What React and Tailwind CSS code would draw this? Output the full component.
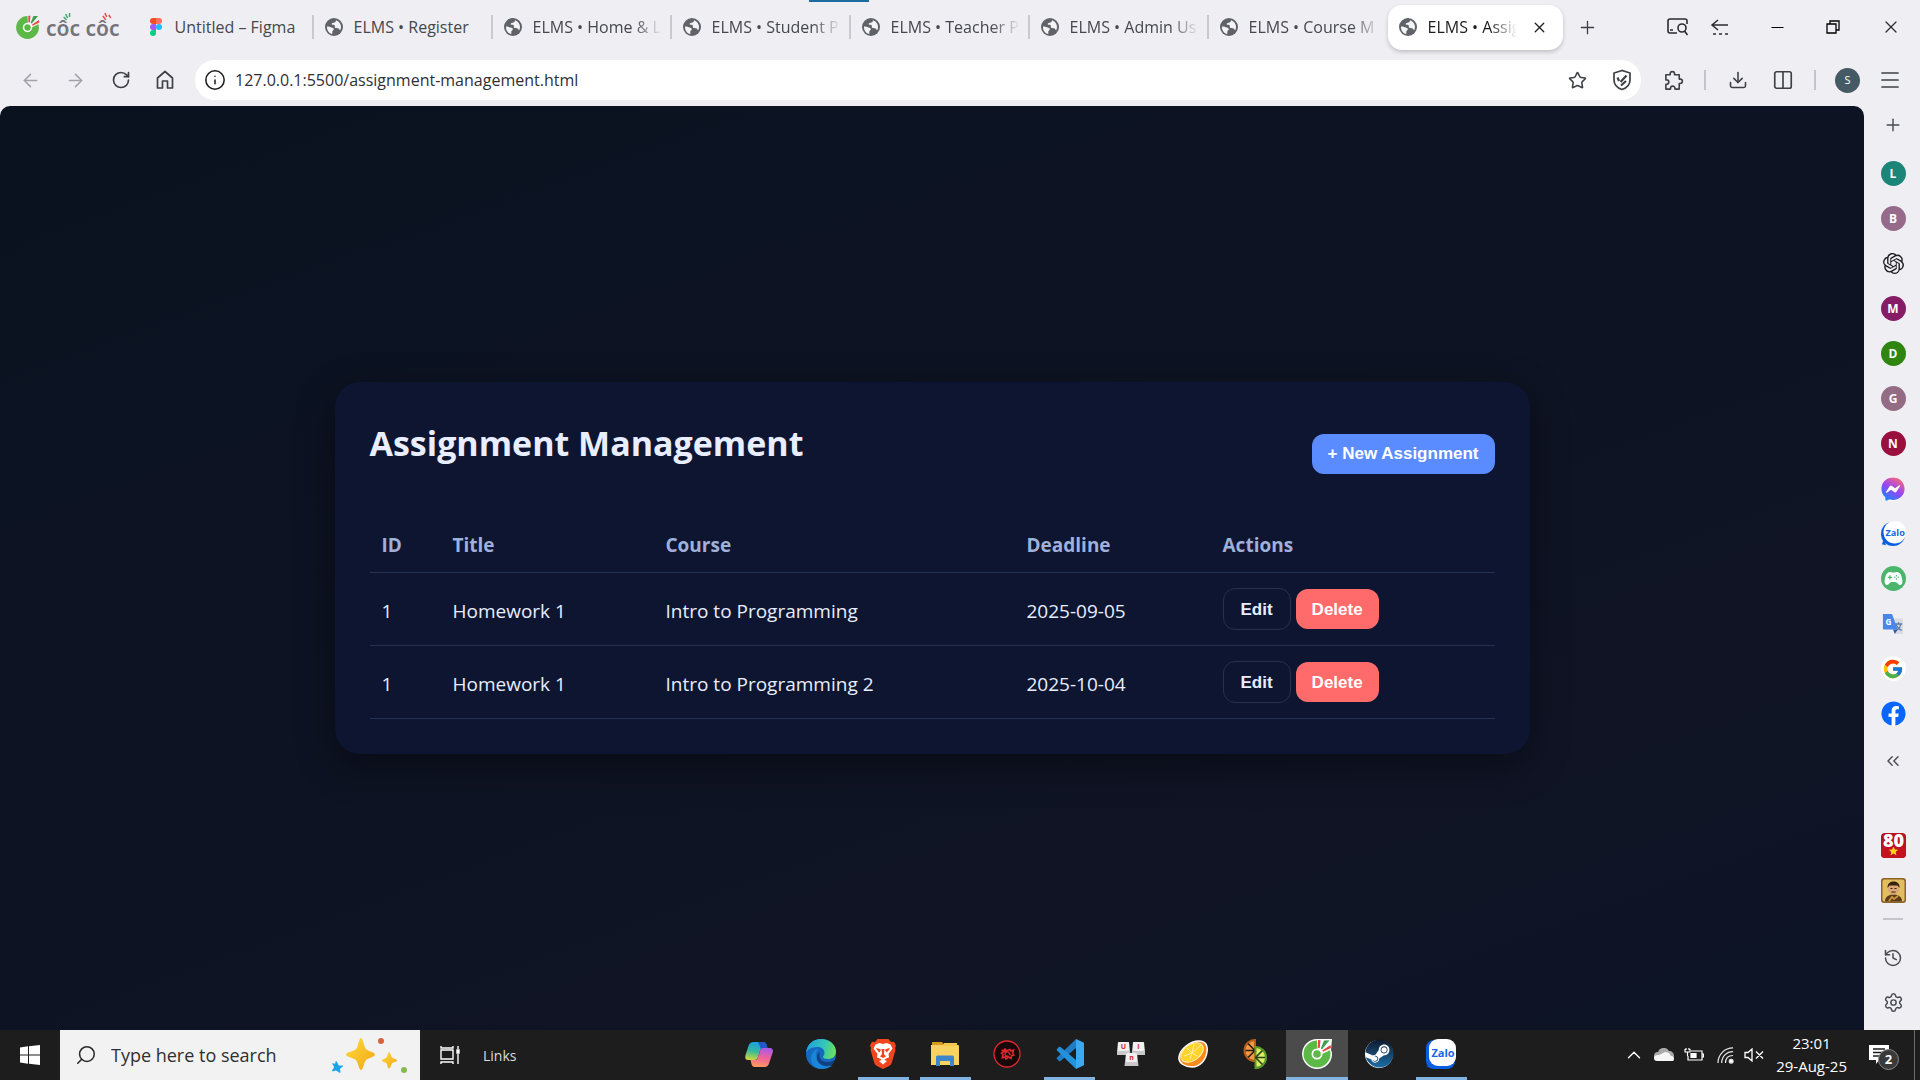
import React from "react";
import {
  ArrowLeft, ArrowRight, RotateCw, Info, Star, Download, Columns2, Menu, Plus, X, Minus,
  ChevronsLeft, History, Settings, ChevronUp, Search,
} from "lucide-react";
import { SiOpenai } from "react-icons/si";
import { FcGoogle } from "react-icons/fc";
import { FaFacebook, FaFacebookMessenger, FaSteam } from "react-icons/fa";
import { IoGameController } from "react-icons/io5";

const tabs = [
  "ELMS • Register",
  "ELMS • Home & L",
  "ELMS • Student P",
  "ELMS • Teacher P",
  "ELMS • Admin Us",
  "ELMS • Course M",
];

const assignments = [
  { id: 1, title: "Homework 1", course: "Intro to Programming", deadline: "2025-09-05" },
  { id: 1, title: "Homework 1", course: "Intro to Programming 2", deadline: "2025-10-04" },
];

function Globe() {
  return (
    <svg viewBox="0 0 18 18" className="size-[18px] shrink-0" aria-hidden="true">
      <circle cx="9" cy="9" r="9" fill="#5f6368" />
      <path d="M2 8.500C3.500 8.200 5 9 6.500 9.500c1.500.4 2.500.8 2.300 2-.2 1-1.500 1-1.500 2.300v2.300C4.200 15.500 1.700 12.500 2 8.500Z" fill="#f4f4f7" />
      <path d="M11 2.300c2.800.8 5 3.500 5 6.700 0 1.200-.3 2.300-.8 3.200-.8-.2-.9-1.600-2-2-1.200-.4-2.500.2-3.200-.8-.6-1 .3-1.700-.6-2.300-1-.6-2 .1-2.600-.7-.4-.8.6-1.500 1.700-1.600 1.200-.1 2.300-.6 2.500-2.500Z" fill="#f4f4f7" />
    </svg>
  );
}

function CocCocMark({ className, outlined }) {
  return (
    <svg viewBox="0 0 32 32" className={className} aria-hidden="true">
      {outlined && <path d="M16 1a15 15 0 1 0 14.500 19c1-4 .5-6-.5-8L31 1Z" fill="#fff" />}
      <path d="M16 2.500A13.500 13.500 0 1 0 29.500 16c0-1.500-.2-2.500-.6-3.800L21 16a5 5 0 1 1-4.500-5Z" fill="#5cb947" />
      <circle cx="16" cy="16" r="5.500" fill="#fff" />
      <circle cx="16" cy="16" r="3.800" fill="#5cb947" />
      <path d="m17 2 2.500.2-.8 8-1.700-.4Z" fill="#e5483d" />
      <path d="m23 2.500 5.500-.2-7.500 9-1.200-.8Z" fill="#3f9e4d" />
      <path d="m29.500 7 .5 3-8 3.800-.7-1.200Z" fill="#e5483d" />
    </svg>
  );
}

function CocCocBrand() {
  return (
    <a href="#home" aria-label="Cốc Cốc" className="mr-[29px] flex h-full shrink-0 items-center gap-[5px]">
      <CocCocMark className="size-[27px]" />
      <span className="relative pt-[2px] font-['Noto_Sans'] text-[21px] leading-[24px] font-semibold text-[#74747a]">
        côc côc
        <svg viewBox="0 0 75 10" className="absolute -top-[3px] left-0 h-[10px] w-full" fill="none" strokeWidth="1.500" aria-hidden="true">
          <path d="m20 3 2 4M18 6l3 3M24 2v4" stroke="#3fa66b" />
          <path d="m60 2 2 4M58 5l3 4M64 4l2 3" stroke="#e5483d" />
        </svg>
      </span>
    </a>
  );
}

function FigmaIcon() {
  return (
    <svg viewBox="0 0 12 18" className="h-[18px] w-[14px] shrink-0" aria-hidden="true">
      <path d="M3 0h3v6H3a3 3 0 0 1 0-6Z" fill="#f24e1e" />
      <path d="M6 0h3a3 3 0 0 1 0 6H6Z" fill="#ff7262" />
      <path d="M3 6h3v6H3a3 3 0 0 1 0-6Z" fill="#a259ff" />
      <circle cx="9" cy="9" r="3" fill="#1abcfe" />
      <path d="M3 12h3v3a3 3 0 1 1-3-3Z" fill="#0acf83" />
    </svg>
  );
}

function TabBar() {
  return (
    <header className="relative flex h-[54px] items-center pl-[14px]">
      <span className="absolute top-0 left-[809px] h-[2px] w-[60px] bg-[#1b6c9f]" />
      <CocCocBrand />
      <nav aria-label="Tabs" className="flex min-w-0 items-center text-[16px] text-[#46474c]">
        <button className="flex h-[24px] w-[165px] items-center gap-[12px] border-r-2 border-[#c9c9ce] text-left">
          <FigmaIcon />
          <span className="whitespace-nowrap">Untitled – Figma</span>
        </button>
        {tabs.map((label, i) => (
          <button
            key={label}
            className={
              "flex h-[24px] w-[179px] items-center gap-[11px] border-[#c9c9ce] pr-[8px] pl-[11px] text-left " +
              (i < tabs.length - 1 ? "border-r-2" : "")
            }
          >
            <Globe />
            <span
              className={
                "min-w-0 flex-1 overflow-hidden whitespace-nowrap " +
                (i > 0 ? "[mask-image:linear-gradient(to_right,black_78%,transparent)]" : "")
              }
            >
              {label}
            </span>
          </button>
        ))}
        <div className="flex h-[45px] w-[175px] items-center rounded-[14px] bg-white pr-[15px] pl-[11px] text-[#1c1c20] shadow-[0_2px_4px_rgba(0,0,0,0.2)]">
          <button className="flex min-w-0 flex-1 items-center gap-[11px] text-left">
            <Globe />
            <span className="min-w-0 flex-1 overflow-hidden whitespace-nowrap [mask-image:linear-gradient(to_right,black_70%,transparent)]">
              ELMS • Assig
            </span>
          </button>
          <button aria-label="Close tab" className="ml-[14px]">
            <X className="size-[17px]" strokeWidth={1.8} />
          </button>
        </div>
      </nav>
      <button aria-label="New tab" className="ml-[14px]">
        <Plus className="size-[21px] text-[#3f4045]" strokeWidth={1.5} />
      </button>
      <div className="ml-auto flex shrink-0 items-center pr-[19px] text-[#2c2c30]">
        <button aria-label="Search page" className="mr-[21px]">
          <svg viewBox="0 0 22 20" className="h-[20px] w-[22px]" fill="none" stroke="currentColor" strokeWidth="1.600">
            <path d="M10 16H3a2 2 0 0 1-2-2V4a2 2 0 0 1 2-2h15a2 2 0 0 1 2 2v3" />
            <circle cx="15" cy="11" r="4" />
            <path d="m17.500 14 3 4M3 13h3" />
          </svg>
        </button>
        <button aria-label="Closed tabs" className="mr-[38px]">
          <svg viewBox="0 0 20 20" className="size-[20px]" fill="none" stroke="currentColor" strokeWidth="1.500">
            <path d="M18 8H2M8 3 2 8l6 5" />
            <path d="M3 17h15" strokeDasharray="3 3" />
          </svg>
        </button>
        <button aria-label="Minimize" className="mr-[39px]">
          <Minus className="size-[19px] text-black" strokeWidth={1.5} />
        </button>
        <button aria-label="Restore" className="mr-[41px]">
          <svg viewBox="0 0 14 14" className="size-[14px]" fill="none" stroke="#000" strokeWidth="1.300">
            <path d="M1 4h9v9H1ZM4 4V1h9v9h-3" />
          </svg>
        </button>
        <button aria-label="Close">
          <X className="size-[20px]" strokeWidth={1.5} />
        </button>
      </div>
    </header>
  );
}

function Toolbar() {
  return (
    <div className="flex h-[52px] items-center pr-[18px] pl-[20px] text-[#3f4045]">
      <button aria-label="Back" className="mr-[24px] text-[#a2a2a8]"><ArrowLeft className="size-[21px]" strokeWidth={1.7} /></button>
      <button aria-label="Forward" className="mr-[25px] text-[#a2a2a8]"><ArrowRight className="size-[21px]" strokeWidth={1.7} /></button>
      <button aria-label="Reload" className="mr-[24px]"><RotateCw className="size-[20px]" strokeWidth={2} /></button>
      <button aria-label="Home" className="mr-[20px]">
        <svg viewBox="0 0 20 20" className="size-[20px]" fill="none" stroke="currentColor" strokeWidth="1.700" strokeLinejoin="round">
          <path d="M2.500 8 10 1.500 17.500 8v10h-5v-7h-5v7h-5Z" />
        </svg>
      </button>
      <div className="flex h-[40px] min-w-0 flex-1 items-center rounded-full bg-white pr-[9px] pl-[9px]">
        <Info className="mr-[9px] size-[22px] text-[#1f1f23]" strokeWidth={1.7} />
        <input
          aria-label="Address"
          defaultValue="127.0.0.1:5500/assignment-management.html"
          className="min-w-0 flex-1 bg-transparent text-[16px] text-[#2f3035] outline-none"
        />
        <button aria-label="Bookmark" className="mr-[25px]"><Star className="size-[19px]" strokeWidth={2} strokeLinejoin="miter" /></button>
        <button aria-label="Shield">
          <svg viewBox="0 0 20 22" className="h-[22px] w-[20px]" fill="none" stroke="currentColor" strokeWidth="1.700">
            <path d="M10 1.500 2 4v7c0 5 3.500 8 8 9.500 4.500-1.500 8-4.500 8-9.500V4Z" />
            <path d="M5.500 8.500 7 12M8.500 13l6-6.500M9 16.500l5-4.500" strokeWidth="2.200" />
          </svg>
        </button>
      </div>
      <button aria-label="Extensions" className="ml-[22px]">
        <svg viewBox="0 0 22 22" className="size-[21px]" fill="none" stroke="currentColor" strokeWidth="1.700" strokeLinejoin="round">
          <path d="M3 5h4.500V4a2.300 2.300 0 0 1 4.600 0v1H17v4.500h1a2.300 2.300 0 0 1 0 4.600h-1V20h-4.500v-.8a2.300 2.300 0 0 0-4.600 0v.8H3v-5h.8a2.300 2.300 0 0 0 0-4.600H3Z" />
        </svg>
      </button>
      <span className="mr-[22px] ml-[20px] h-[20px] w-[2px] bg-[#c4c4ca]" />
      <button aria-label="Downloads"><Download className="size-[20px]" strokeWidth={1.9} /></button>
      <button aria-label="Split view" className="ml-[24px]"><Columns2 className="size-[22px]" strokeWidth={1.8} /></button>
      <span className="mr-[19px] ml-[20px] h-[20px] w-[2px] bg-[#c4c4ca]" />
      <button aria-label="Profile" className="flex size-[25px] items-center justify-center rounded-full bg-[#455a64] text-[11px] text-white">S</button>
      <button aria-label="Menu" className="ml-[18px]"><Menu className="size-[24px]" strokeWidth={1.7} /></button>
    </div>
  );
}

const shortcuts = [
  { letter: "L", className: "bg-[#1b8577]" },
  { letter: "B", className: "bg-[#966a8b]" },
  { name: "ChatGPT", icon: <SiOpenai className="size-[21px] text-[#1d1d1f]" /> },
  { letter: "M", className: "bg-[#871c66]" },
  { letter: "D", className: "bg-[#2e850f]" },
  { letter: "G", className: "bg-[#946b85]" },
  { letter: "N", className: "bg-[#990f3d]" },
  { name: "Messenger", icon: <Messenger /> },
  { name: "Zalo", icon: <Zalo className="size-[25px]" round /> },
  {
    name: "Games",
    icon: (
      <span className="flex size-[25px] items-center justify-center rounded-full bg-[#4bb56c]">
        <IoGameController className="size-[19px] text-white" />
      </span>
    ),
  },
  { name: "Translate", icon: <Translate /> },
  {
    name: "Google",
    icon: (
      <span className="flex size-[25px] items-center justify-center rounded-full bg-white">
        <FcGoogle className="size-[22px]" />
      </span>
    ),
  },
  { name: "Facebook", icon: <span className="rounded-full bg-white"><FaFacebook className="size-[25px] text-[#0866ff]" /></span> },
];

function Messenger() {
  return (
    <span className="rounded-full bg-white">
      <svg width="0" height="0" className="absolute" aria-hidden="true">
        <linearGradient id="messenger" x1="0.2" y1="1" x2="0.8" y2="0">
          <stop offset="0" stopColor="#1288ff" />
          <stop offset="0.5" stopColor="#9a45f5" />
          <stop offset="1" stopColor="#ff6a70" />
        </linearGradient>
      </svg>
      <FaFacebookMessenger className="size-[24px] fill-[url(#messenger)]" />
    </span>
  );
}

function Zalo({ className, round }) {
  return (
    <svg viewBox="0 0 30 30" className={className} aria-hidden="true">
      <rect width="29" height="29" y="1" rx={round ? 15 : 8} fill="#0a5fe0" />
      <path d="M3 20c0 3-1 6-2 8l5 1Z" fill="#0a5fe0" />
      <rect x="3" width="27" height="27" rx={round ? 14 : 9} fill="#fff" />
      <text x="17" y="18" textAnchor="middle" fontFamily="Open Sans, sans-serif" fontWeight="700" fontSize="11" fill="#1767e5">Zalo</text>
    </svg>
  );
}

function Translate() {
  return (
    <svg viewBox="0 0 24 24" className="size-[22px]" aria-hidden="true">
      <path d="M9 6h13a1 1 0 0 1 1 1v15a1 1 0 0 1-1 1h-8Z" fill="#d8dbe0" />
      <path d="M14 12h8M18 10v2M20.500 12c-.5 3-3 6-5 7M15.500 13c1 3 4 5 6 6" stroke="#5f7ba6" strokeWidth="1.400" fill="none" />
      <path d="m12 18 5 0-3 5Z" fill="#3457a8" />
      <path d="M1 1h10l6 17H2a1 1 0 0 1-1-1Z" fill="#4a86e8" />
      <text x="7" y="13" textAnchor="middle" fontFamily="Open Sans, sans-serif" fontWeight="700" fontSize="9" fill="#fff">G</text>
    </svg>
  );
}

function SideRail() {
  return (
    <aside className="flex w-[56px] shrink-0 flex-col items-center pt-[9px] pl-[2px] text-[#4a4b50]">
      <button aria-label="Add shortcut" className="mb-[26px]"><Plus className="size-[20px]" strokeWidth={1.7} /></button>
      <div className="flex flex-col items-center gap-[20px]">
        {shortcuts.map((s) => (
          <button
            key={s.letter || s.name}
            aria-label={s.letter || s.name}
            className={
              "flex size-[25px] items-center justify-center rounded-full text-[12px] font-bold text-white " + (s.className || "")
            }
          >
            {s.letter || s.icon}
          </button>
        ))}
      </div>
      <button aria-label="Collapse" className="mt-[25px]"><ChevronsLeft className="size-[20px]" strokeWidth={1.7} /></button>
      <div className="mt-[62px] flex flex-col items-center gap-[20px]">
        <button aria-label="80">
          <svg viewBox="0 0 25 25" className="size-[25px]" aria-hidden="true">
            <rect width="25" height="25" rx="4" fill="#b81220" />
            <text x="12.500" y="14" textAnchor="middle" fontFamily="Open Sans, sans-serif" fontWeight="800" fontSize="18" fill="#fff">80</text>
            <path d="M0 14h25v7a4 4 0 0 1-4 4H4a4 4 0 0 1-4-4Z" fill="#c4121f" />
            <path d="m12.500 13.500 1.400 3 3.200.3-2.400 2.200.7 3.200-2.900-1.700-2.900 1.700.7-3.200-2.400-2.200 3.200-.3Z" fill="#ffd21e" />
          </svg>
        </button>
        <button aria-label="Game">
          <svg viewBox="0 0 25 25" className="size-[25px]" aria-hidden="true">
            <rect width="25" height="25" rx="3" fill="#8a6426" />
            <rect x="1.500" y="1.500" width="22" height="22" rx="2" fill="#e3bd62" />
            <path d="M4 23.500c0-5 4-7 8.500-7s8.500 2 8.500 7Z" fill="#5b3a1b" />
            <circle cx="12.500" cy="11" r="5.500" fill="#dca676" />
            <path d="M6.500 10c0-5 3-6.500 6-6.500s6.500 1.500 6 6.500l-2-2.500H8.500Z" fill="#35230f" />
            <path d="M9.500 10.500h2M13.500 10.500h2M10.500 14h4" stroke="#35230f" />
            <path d="m8 23 3-4 2 2 4-3" stroke="#c8933d" strokeWidth="2" fill="none" />
          </svg>
        </button>
      </div>
      <span className="mt-[15px] h-[2px] w-[20px] bg-[#c4c4ca]" />
      <button aria-label="History" className="mt-[28px]"><History className="size-[20px]" strokeWidth={1.8} /></button>
      <button aria-label="Settings" className="mt-[24px]"><Settings className="size-[21px]" strokeWidth={1.7} /></button>
    </aside>
  );
}

function AssignmentPage() {
  return (
    <main className="flex min-w-0 flex-1 items-center justify-center rounded-t-[10px] bg-[linear-gradient(160deg,#0a1220_0%,#0d1322_40%,#101425_75%,#0c1426_100%)] p-6 text-[#e8edff]">
      <section className="w-full max-w-[1195px] rounded-[25px] bg-[#0d1530] p-[35px] shadow-[0_12px_38px_rgba(0,0,0,0.4)]">
        <div className="mb-[27px] flex items-center justify-between">
          <h1 className="mb-[22px] text-[34px] leading-[52px] font-bold">Assignment Management</h1>
          <button className="h-[40px] rounded-[12px] bg-[#5b8cff] px-[16px] font-['Liberation_Sans'] text-[17px] font-bold text-white">
            + New Assignment
          </button>
        </div>
        <table className="w-full table-fixed border-collapse text-left">
          <colgroup>
            <col className="w-[71px]" />
            <col className="w-[213px]" />
            <col className="w-[361px]" />
            <col className="w-[196px]" />
            <col />
          </colgroup>
          <thead>
            <tr className="h-[55px] border-b border-[#243150] text-[19px] text-[#9fb0da]">
              {["ID", "Title", "Course", "Deadline", "Actions"].map((h) => (
                <th key={h} className="px-[12px] font-bold">{h}</th>
              ))}
            </tr>
          </thead>
          <tbody>
            {assignments.map((a) => (
              <tr key={a.deadline} className="h-[73px] border-b border-[#243150] text-[19px]">
                <td className="px-[12px] pt-[4px]">{a.id}</td>
                <td className="px-[12px] pt-[4px]">{a.title}</td>
                <td className="px-[12px] pt-[4px]">{a.course}</td>
                <td className="px-[12px] pt-[4px]">{a.deadline}</td>
                <td className="px-[12px]">
                  <div className="flex items-center gap-[5px] font-['Liberation_Sans'] text-[17px] font-bold">
                    <button className="h-[42px] rounded-[12px] border border-[#26314f] px-[17px]">Edit</button>
                    <button className="h-[40px] rounded-[12px] bg-[#ff6b6b] px-[16px] text-white">Delete</button>
                  </div>
                </td>
              </tr>
            ))}
          </tbody>
        </table>
      </section>
    </main>
  );
}

function Copilot() {
  return (
    <svg viewBox="0 0 30 30" className="size-[30px]" aria-hidden="true">
      <defs>
        <linearGradient id="cpl" x1="0.5" y1="0" x2="0.3" y2="1">
          <stop offset="0" stopColor="#1aa0e8" /><stop offset="0.5" stopColor="#35b7a0" /><stop offset="1" stopColor="#c9d93a" />
        </linearGradient>
        <linearGradient id="cpr" x1="0.6" y1="0" x2="0.4" y2="1">
          <stop offset="0" stopColor="#a85be8" /><stop offset="0.5" stopColor="#f0629a" /><stop offset="1" stopColor="#ff9a5c" />
        </linearGradient>
      </defs>
      <path d="M10 3h9c2 0 3 1 3.500 3l1 3h-4c-2 0-3 1-3.500 3l-2 6c-.5 2-1.500 3-3.500 3H4c-3 0-3-3-2.500-5l3-9C5.500 4 7 3 10 3Z" fill="url(#cpl)" />
      <path d="M14 3h5c2 0 3 1 3.500 3l1 3h-4c-1 0-2 0-2.500 1Z" fill="#2356c8" />
      <path d="M20 28h-9c-2 0-3-1-3.500-3l-1-4h4c2 0 3-1 3.500-3l2-6c.5-2 1.500-3 3.500-3H26c3 0 3.500 3 2.500 5l-3 9c-1 4-2.500 5-5.500 5Z" fill="url(#cpr)" />
    </svg>
  );
}

function Edge() {
  return (
    <svg viewBox="0 0 30 30" className="size-[30px]" aria-hidden="true">
      <defs>
        <linearGradient id="edgeTop" x1="0" y1="0.3" x2="1" y2="0.5">
          <stop offset="0" stopColor="#1f9fe0" /><stop offset="0.6" stopColor="#35c7b5" /><stop offset="1" stopColor="#6be05a" />
        </linearGradient>
      </defs>
      <circle cx="15" cy="15" r="15" fill="#1669c1" />
      <path d="M0 14C1 5 7 0 15 0c9 0 15 6 15 12.500 0 5-4 7.500-8 7.500-3 0-5-1-5-2s1.500-1.500 1.500-4.500C18.500 10 15 8 11 8 5 8 1 11 0 14Z" fill="url(#edgeTop)" />
      <path d="M10 17c0 6 5 10.500 11 10.500 2 0 4-.5 6-2C24 29 20 30 16 30 9 30 5 25 5 19.500c0-5 3-9 7-9.500-1.500 2-2 4-2 7Z" fill="#1a86d8" />
      <path d="M14 13c-2 5 1 10 7 10 3 0 5-.5 7-2 .5 1-.5 3-2 4.500-7 4-15-1-15-7 0-3 1-4.500 3-5.500Z" fill="#123f7f" />
    </svg>
  );
}

function Brave() {
  return (
    <svg viewBox="0 0 26 30" className="h-[30px] w-[26px]" aria-hidden="true">
      <path d="M7.500 0h11l2.500 3 3-.3 2 3.800-1 2.500.5 2-3.500 12c-.5 2-1.500 3-3 4l-6 3-6-3c-1.500-1-2.500-2-3-4L.500 11l.5-2L0 6.500l2-3.800L5 3Z" fill="#f1461d" />
      <path d="m13 5 3.500-1 4 1.500 2 4-4 5.500.5 3.500-3 1-3 2.500-3-2.500-3-1 .5-3.500-4-5.500 2-4 4-1.500Z" fill="#fff" />
      <path d="m6 9 4 1 1 1-1.500 2.500L7 11ZM20 9l-4 1-1 1 1.500 2.500L19 11ZM11.500 10h3l-.5 5 2 2.500-3 1.500-3-1.500 2-2.500Z" fill="#f1461d" />
      <path d="m9 22 4-1.500 4 1.500-4 3.500Z" fill="#fff" />
    </svg>
  );
}

function Explorer() {
  return (
    <svg viewBox="0 0 28 24" className="h-[24px] w-[28px]" aria-hidden="true">
      <path d="M1 0h10l2 3H1Z" fill="#d99b1e" />
      <path d="M0 3h27a1 1 0 0 1 1 1v19H0Z" fill="#f9d262" />
      <path d="M13 1h13v3H11Z" fill="#f4c64e" />
      <path d="M5 24V15a1.500 1.500 0 0 1 1.500-1.500h15A1.500 1.500 0 0 1 23 15v9h-4v-5H9v5Z" fill="#3c87c9" />
    </svg>
  );
}

function GearRing() {
  return (
    <svg viewBox="0 0 28 28" className="size-[28px]" fill="none" stroke="#e0282e" aria-hidden="true">
      <circle cx="14" cy="14" r="13" strokeWidth="1.300" fill="#17090a" />
      <path d="m8.500 10 2 1 1.500-2 1.200 1.500M17 9.500l1 1.500 2.500-1-.7 3 1 2-2.300.8-.5 2.700-2.500-1.500-2.500 2-.7-2-3 .7.8-3-1.600-1.500 1.800-1.200Z" strokeWidth="1.600" />
      <path d="M15.500 12.200c-1.800-1-3.500.2-3.500 1.900 0 1.800 2 2.700 3.500 1.700M15.500 12.200 17.500 15" strokeWidth="1.400" />
    </svg>
  );
}

function VsCode() {
  return (
    <svg viewBox="0 0 30 30" className="size-[30px]" aria-hidden="true">
      <path d="M22 0 3 18.500c-.5.500-.5 1 0 1.500l2 2c.5.500 1 .5 1.500 0L22 9Z" fill="#1f7cc4" />
      <path d="M22 30 3 11.500c-.5-.5-.5-1 0-1.500l2-2c.5-.5 1-.5 1.500 0L22 21Z" fill="#2292dc" />
      <path d="m22 0 7 3.200c.6.300 1 .8 1 1.500v20.600c0 .7-.4 1.200-1 1.500L22 30Z" fill="#3ba9f2" />
    </svg>
  );
}

function Keycap({ x, y, letter }) {
  return (
    <g>
      <path d={`M${x + 1} ${y}h11l1.500 13h-14Z`} fill="#c9c9cc" />
      <rect x={x + 1} y={y} width="11" height="9" rx="1.500" fill="#f0f0f2" />
      <text x={x + 6.5} y={y + 7} textAnchor="middle" fontFamily="Open Sans, sans-serif" fontWeight="700" fontSize="7" fill="#d02a2a">{letter}</text>
    </g>
  );
}

function UniKey() {
  return (
    <svg viewBox="0 0 28 26" className="h-[26px] w-[28px]" aria-hidden="true">
      <Keycap x={0} y={1} letter="U" />
      <Keycap x={15} y={1} letter="I" />
      <Keycap x={8} y={12} letter="n" />
    </svg>
  );
}

function Orange() {
  return (
    <svg viewBox="0 0 30 28" className="h-[28px] w-[30px]" aria-hidden="true">
      <path d="M1 17C2 9 12 1 21 1c7 0 9 5 8 11-1 8-7 15-15 15C7 27 0 23 1 17Z" fill="#f58a1f" stroke="#fff" strokeWidth="1.500" />
      <ellipse cx="14" cy="12.500" rx="12.500" ry="8" transform="rotate(-35 14 12.500)" fill="#ffd32b" stroke="#fff3b8" />
      <path d="M14 13 6 16M14 13l9-8M14 13l5 3M14 13 9 8M14 13l-2 6M14 13l2-9" stroke="#fff0a0" />
    </svg>
  );
}

function CitrusHalves() {
  return (
    <svg viewBox="0 0 24 30" className="h-[30px] w-[24px]" aria-hidden="true">
      <path d="M12 1a10 10 0 0 0 0 21Z" fill="#f09a45" stroke="#b85d18" strokeWidth="2" />
      <path d="M12 11.500H2.500M12 11.500 5 4.500M12 11.500l-7 7" stroke="#2b1a10" strokeWidth="1.600" />
      <path d="M12.500 8a10 10 0 0 1 0 21Z" fill="#d9ee62" stroke="#5c9a28" strokeWidth="2" />
      <path d="M12.500 18.500H22M12.500 18.500l7-7M12.500 18.500l7 7" stroke="#2a4216" strokeWidth="1.600" />
    </svg>
  );
}

function Sparkles() {
  return (
    <svg viewBox="0 0 78 36" className="h-[36px] w-[78px]" aria-hidden="true">
      <defs>
        <linearGradient id="gold" x1="0" y1="0" x2="1" y2="1">
          <stop offset="0" stopColor="#ffdc3c" /><stop offset="1" stopColor="#f2a516" />
        </linearGradient>
      </defs>
      <path d="M30 1c2 0 3 9 5 11 2 2.500 9 3 9 5.500S37 21 35 23c-2 2.500-3 10-5 10s-3-7.500-5-10c-2-2-10-3-10-5.500S23 14.500 25 12c2-2 3-11 5-11Z" fill="url(#gold)" />
      <path d="M58 15c1 0 2 4 3 5.500 1 1 5 1.500 5 3s-4 1.500-5 3c-1 1-1.500 5-3 5s-1.500-4-2.500-5c-1-1.500-4.500-1.500-4.500-3s3.500-2 4.500-3c1-1.500 1.500-5.500 2.500-5.500Z" fill="url(#gold)" />
      <path d="M5 24c1 0 2 4 3 4.500s4-.5 4 .500-3 2-3 3 1 4 0 4-3-2.500-4-2.500S1 35 1 34s2-3 2-4-2-3-2-3.500 2.500.5 3 0S4.500 24 5 24Z" fill="#1ba3ea" />
      <circle cx="50" cy="4" r="3" fill="#d9633c" />
      <circle cx="73" cy="33" r="3" fill="#86b94e" />
    </svg>
  );
}

const apps = [
  { name: "Copilot", icon: <Copilot /> },
  { name: "Edge", icon: <Edge /> },
  { name: "Brave", icon: <Brave />, open: true },
  { name: "File Explorer", icon: <Explorer />, open: true },
  { name: "Launcher", icon: <GearRing /> },
  { name: "Visual Studio Code", icon: <VsCode />, open: true },
  { name: "UniKey", icon: <UniKey /> },
  { name: "Orange", icon: <Orange /> },
  { name: "Citrus", icon: <CitrusHalves /> },
  { name: "Cốc Cốc", icon: <CocCocMark className="size-[32px]" outlined />, open: true, active: true },
  { name: "Steam", icon: <Steam /> },
  { name: "Zalo", icon: <Zalo className="size-[30px]" />, open: true },
];

function Steam() {
  return (
    <span className="flex size-[28px] items-center justify-center rounded-full bg-white">
      <svg width="0" height="0" className="absolute" aria-hidden="true">
        <linearGradient id="steam" x1="0" y1="0" x2="0" y2="1">
          <stop offset="0" stopColor="#10182c" /><stop offset="1" stopColor="#1b6ea5" />
        </linearGradient>
      </svg>
      <FaSteam className="size-[29px] shrink-0 fill-[url(#steam)]" />
    </span>
  );
}

function Taskbar() {
  return (
    <footer className="flex h-[50px] items-center bg-[#1d1d1e] text-white">
      <button aria-label="Start" className="flex w-[60px] justify-center">
        <svg viewBox="0 0 20 20" className="size-[20px]" fill="#fff">
          <path d="m0 2.500 8-1.200v8.200H0ZM9 1.200 20 0v9.500H9ZM0 10.500h8v8.200l-8-1.200ZM9 10.500h11V20L9 18.800Z" />
        </svg>
      </button>
      <label className="flex h-full w-[360px] items-center bg-[#f2f2f2] pr-[11px] pl-[15px] text-[#2b2b2b]">
        <Search className="mr-[14px] size-[22px] -scale-x-100" strokeWidth={1.7} />
        <input aria-label="Search" placeholder="Type here to search" className="min-w-0 flex-1 bg-transparent text-[18px] outline-none placeholder:text-[#2f2f2f]" />
        <Sparkles />
      </label>
      <button aria-label="Task view" className="ml-[20px]">
        <svg viewBox="0 0 20 20" className="size-[20px]" fill="none" stroke="#fff" strokeWidth="1.400">
          <path d="M1 5h12v9H1ZM1 1v2h12V1M1 19v-2h12v2M18 1v3M18 9v10" />
          <path d="M17 5h2v3h-2Z" fill="#fff" />
        </svg>
      </button>
      <button className="ml-[23px] text-[14px] text-[#dcdcdc]">Links</button>
      <nav aria-label="Apps" className="ml-auto flex h-full">
        {apps.map((app) => (
          <button
            key={app.name}
            aria-label={app.name}
            className={"flex h-full w-[62px] flex-col items-center " + (app.active ? "bg-[#4b4b4c]" : "")}
          >
            <span className="flex flex-1 items-center">{app.icon}</span>
            <span className={"h-[3px] " + (app.active ? "w-full " : "w-[51px] ") + (app.open ? "bg-[#83b3e3]" : "")} />
          </button>
        ))}
      </nav>
      <div className="ml-[151px] flex h-full shrink-0 items-center">
        <button aria-label="Hidden icons"><ChevronUp className="size-[22px]" strokeWidth={1.5} /></button>
        <svg viewBox="0 0 20 14" className="ml-[9px] h-[14px] w-[20px]" aria-label="OneDrive">
          <path d="M4 12a4 4 0 0 1 0-8 6 6 0 0 1 11-1c3 0 5 2 5 5s-2 4-4 4Z" fill="#a9a9a9" />
          <path d="M3 13c-2 0-3-1-3-3 0-3 3-3 5-3l6-3c5 0 5 3 6 4 2 0 3 1 3 3s-1 2-3 2Z" fill="#f5f5f5" />
        </svg>
        <svg viewBox="0 0 20 14" className="ml-[10px] h-[14px] w-[20px]" fill="none" stroke="#fff" strokeWidth="1.200" aria-label="Battery">
          <path d="M7 3h11v9H4V8M18 6h1.500v3H18M1 1v3h5V1M2 0v2M5 0v2M3.500 4v4" />
          <path d="M7 5.500h5v4H7Z" fill="#fff" />
        </svg>
        <svg viewBox="0 0 18 18" className="ml-[13px] size-[17px]" fill="none" stroke="#e8e8e8" strokeWidth="1.300" aria-label="Wi-Fi">
          <path d="M1 17C1 8 8 1 17 1M5 17C5 10 10 5 17 5M9 17c0-5 3-8 8-8" />
          <circle cx="15" cy="15" r="2" fill="#fff" />
        </svg>
        <svg viewBox="0 0 20 14" className="ml-[10px] h-[14px] w-[20px]" fill="none" stroke="#fff" strokeWidth="1.300" aria-label="Muted">
          <path d="M1 4.500h3L8 1v12L4 9.500H1ZM12 3.500l7 7M19 3.500l-7 7" />
        </svg>
        <div className="ml-[12px] text-center text-[15px] leading-[23px]">
          <div>23:01</div>
          <div>29-Aug-25</div>
        </div>
        <button aria-label="Notifications" className="relative mr-[14px] ml-[22px] h-[30px] w-[31px]">
          <svg viewBox="0 0 20 20" className="size-[20px]">
            <path d="M0 0h20v15H10l-3 4v-4H0Z" fill="#fff" />
            <path d="M4 4h12M4 7.500h12M4 11h12" stroke="#1d1d1e" strokeWidth="1.300" />
          </svg>
          <span className="absolute top-[9px] left-[9px] flex size-[21px] items-center justify-center rounded-full border border-[#8a8a8a] bg-[#3a3a3b] text-[13px] font-bold">2</span>
        </button>
        <span className="mr-[5px] h-full w-px bg-[#6b6b6b]" />
      </div>
    </footer>
  );
}

export default function App() {
  return (
    <div className="flex min-h-screen flex-col overflow-hidden bg-[#efeef3] font-['Open_Sans','Noto_Sans',sans-serif]">
      <TabBar />
      <Toolbar />
      <div className="flex flex-1">
        <AssignmentPage />
        <SideRail />
      </div>
      <Taskbar />
    </div>
  );
}
